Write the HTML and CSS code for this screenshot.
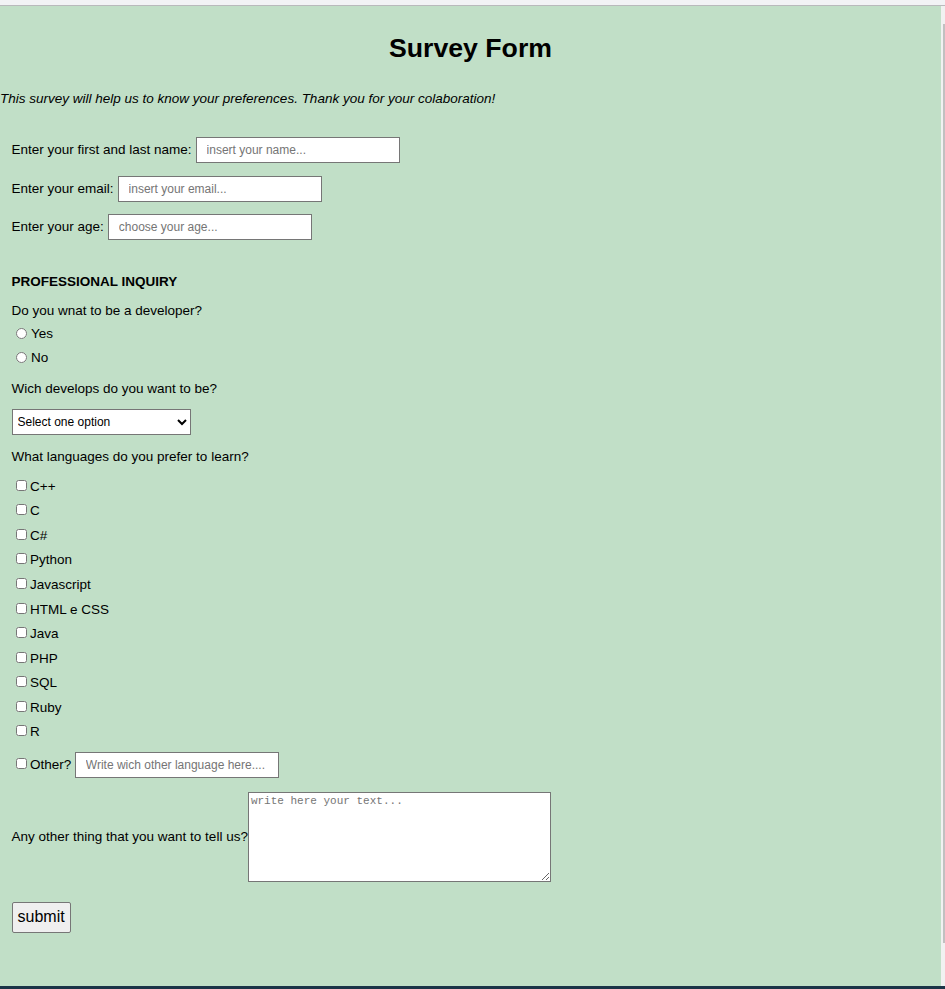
FILE: index.html
```html
<!DOCTYPE html>
<html lang="en">
<head>
<meta charset="utf-8">
<title>Survey Form</title>
<link rel="stylesheet" href="styles.css">
</head>
<body>
<div class="frame">
  <div class="topbar"></div>
  <div class="middle">
    <main class="page">
      <h1 class="title">Survey Form</h1>
      <p class="intro">This survey will help us to know your preferences. Thank you for your colaboration!</p>
      <form class="survey">
        <div class="field field-first">
          <label for="name">Enter your first and last name:</label>
          <input class="text-input" id="name" type="text" placeholder="insert your name...">
        </div>
        <div class="field field-second">
          <label for="email">Enter your email:</label>
          <input class="text-input" id="email" type="email" placeholder="insert your email...">
        </div>
        <div class="field field-third">
          <label for="age">Enter your age:</label>
          <input class="text-input" id="age" type="text" placeholder="choose your age...">
        </div>

        <h3 class="section-title">PROFESSIONAL INQUIRY</h3>
        <p class="question q-dev">Do you wnat to be a developer?</p>
        <div class="choice-list radios">
          <label class="choice"><input class="radio" type="radio" name="dev" value="yes"><span>Yes</span></label>
          <label class="choice"><input class="radio" type="radio" name="dev" value="no"><span>No</span></label>
        </div>

        <p class="question q-which">Wich develops do you want to be?</p>
        <select class="select">
          <option>Select one option</option>
          <option>Front-end</option>
          <option>Back-end</option>
          <option>Full-stack</option>
        </select>

        <p class="question q-lang">What languages do you prefer to learn?</p>
        <div class="choice-list checks">
          <label class="choice check-row"><input class="check" type="checkbox"><span>C++</span></label>
          <label class="choice check-row"><input class="check" type="checkbox"><span>C</span></label>
          <label class="choice check-row"><input class="check" type="checkbox"><span>C#</span></label>
          <label class="choice check-row"><input class="check" type="checkbox"><span>Python</span></label>
          <label class="choice check-row"><input class="check" type="checkbox"><span>Javascript</span></label>
          <label class="choice check-row"><input class="check" type="checkbox"><span>HTML e CSS</span></label>
          <label class="choice check-row"><input class="check" type="checkbox"><span>Java</span></label>
          <label class="choice check-row"><input class="check" type="checkbox"><span>PHP</span></label>
          <label class="choice check-row"><input class="check" type="checkbox"><span>SQL</span></label>
          <label class="choice check-row"><input class="check" type="checkbox"><span>Ruby</span></label>
          <label class="choice check-row"><input class="check" type="checkbox"><span>R</span></label>
        </div>
        <div class="other-row">
          <input class="check" type="checkbox" id="other"><label for="other">Other?</label>
          <input class="text-input" type="text" placeholder="Write wich other language here....">
        </div>

        <div class="comment-row">Any other thing that you want to tell us?<textarea class="comment" placeholder="write here your text..."></textarea></div>

        <button class="submit" type="submit">submit</button>
      </form>
    </main>
    <div class="scrollbar"><div class="thumb"></div></div>
  </div>
  <div class="bottombar"></div>
</div>
</body>
</html>
```

FILE: styles.css
```css
html, body {
  margin: 0;
  padding: 0;
  overflow: hidden;
}

body {
  font-family: "Liberation Sans", Arial, sans-serif;
  font-size: 13.5px;
  color: #000;
}

.frame {
  width: 945px;
  height: 989px;
  display: flex;
  flex-direction: column;
}

.topbar {
  height: 5px;
  background: #f2f3f5;
  border-bottom: 1px solid #b9babc;
  flex: none;
}

.middle {
  height: 980px;
  display: flex;
  flex: none;
}

.page {
  width: 941px;
  height: 980px;
  background: #c1dfc7;
  overflow: hidden;
  padding-top: 27.4px;
  box-sizing: border-box;
  flex: none;
}

.scrollbar {
  width: 4px;
  background: #f1f1f1;
  padding-top: 18px;
  box-sizing: border-box;
  display: flex;
  justify-content: flex-end;
  flex: none;
}

.thumb {
  width: 2.5px;
  height: 919px;
  background: #c1c1c1;
}

.bottombar {
  height: 3px;
  background: #1b3447;
  flex: none;
}

.title {
  margin: 0;
  font-size: 26.67px;
  font-weight: bold;
  text-align: center;
  line-height: normal;
}

.intro {
  margin: 26.6px 0 0;
  font-style: italic;
}

.survey {
  padding-left: 11.5px;
}

.field {
  display: flex;
  align-items: center;
  gap: 4px;
  height: 26px;
}

.field-first { margin-top: 31px; }
.field-second { margin-top: 13px; }
.field-third { margin-top: 12px; }

.text-input {
  box-sizing: border-box;
  width: 204px;
  height: 26px;
  margin: 0;
  padding: 0 10px;
  border: 1px solid #767676;
  border-radius: 0;
  background: #fff;
  font-family: "Liberation Sans", Arial, sans-serif;
  font-size: 12px;
}

.text-input::placeholder,
.comment::placeholder {
  color: #757575;
}

.section-title {
  margin: 33.7px 0 0;
  font-size: 13.5px;
  font-weight: bold;
}

.question {
  margin: 0;
}

.q-dev { margin-top: 14.7px; }
.q-which { margin-top: 11.3px; }
.q-lang { margin-top: 13.7px; }

.choice-list {
  display: flex;
  flex-direction: column;
}

.radios { margin-top: 3.4px; }
.checks { margin-top: 10px; }

.choice {
  display: flex;
  align-items: center;
  height: 24px;
}

.check-row {
  height: 24.6px;
}

.radio {
  width: 11px;
  height: 11px;
  margin: 0 4px 1px 4.5px;
}

.check {
  width: 11px;
  height: 11px;
  margin: 0 3px 2px 4.5px;
}

.select {
  display: block;
  box-sizing: border-box;
  margin: 13px 0 0;
  width: 179px;
  height: 26px;
  padding: 0 1px;
  border: 1px solid #767676;
  border-radius: 0;
  background: #fff;
  color: #000;
  font-family: "Liberation Sans", Arial, sans-serif;
  font-size: 12px;
}

.other-row {
  display: flex;
  align-items: center;
  height: 26px;
  margin-top: 7.6px;
}

.other-row label {
  margin-right: 3.5px;
}

.comment-row {
  margin-top: 13.7px;
}

.comment {
  box-sizing: border-box;
  width: 303px;
  height: 90px;
  margin: 0;
  padding: 2px;
  vertical-align: middle;
  border: 1px solid #767676;
  border-radius: 0;
  background: #fff;
  font-family: "Liberation Mono", monospace;
  font-size: 11px;
}

.submit {
  display: block;
  box-sizing: border-box;
  margin: 20.3px 0 0;
  height: 31px;
  padding: 0 5px;
  border: 1px solid #767676;
  border-radius: 2px;
  background: #efefef;
  color: #000;
  font-family: "Liberation Sans", Arial, sans-serif;
  font-size: 16px;
}
```
